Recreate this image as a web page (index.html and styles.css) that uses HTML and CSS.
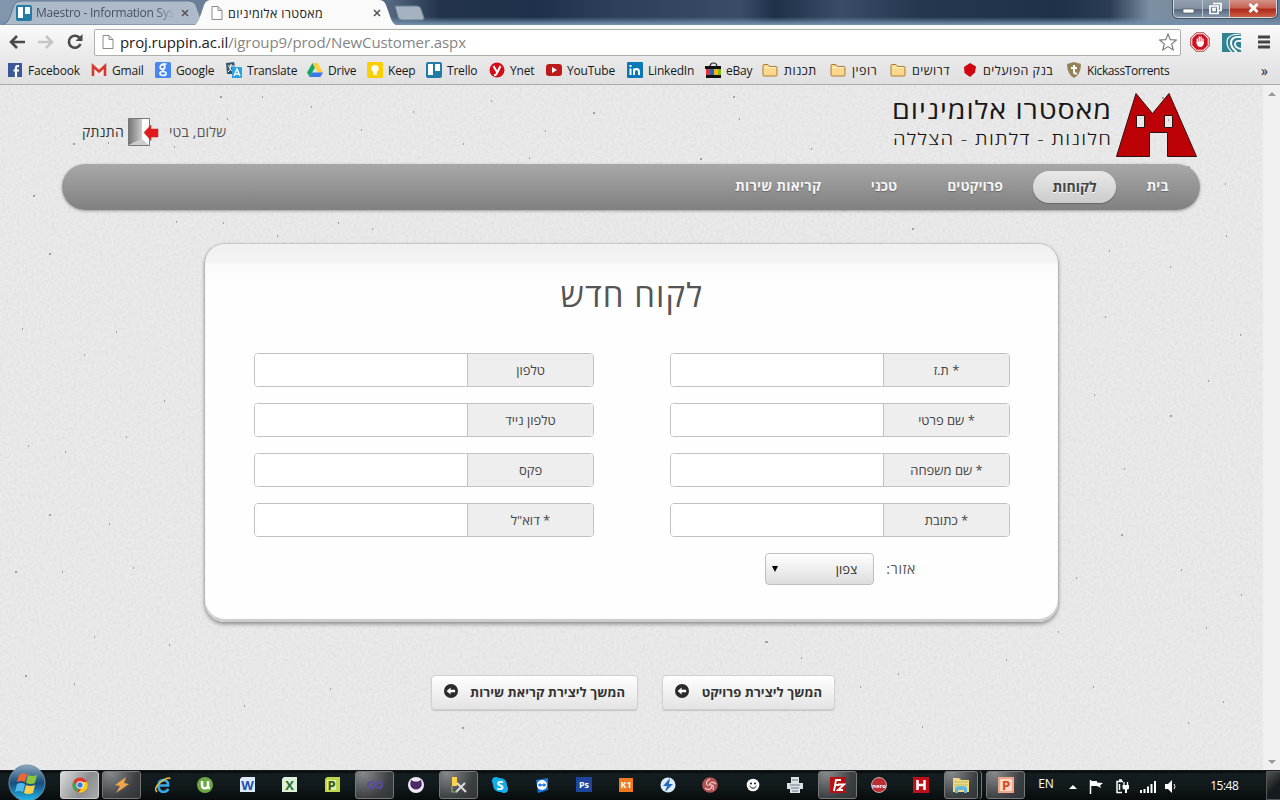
FILE: index.html
```html
<!DOCTYPE html>
<html lang="he">
<head>
<meta charset="utf-8">
<title>מאסטרו אלומיניום</title>
<link rel="stylesheet" href="styles.css">
</head>
<body>
<svg width="0" height="0" class="defs">
  <defs>
    <symbol id="doc" viewBox="0 0 12 14"><path d="M1 .5h6l4 4v9H1z" fill="#fff" stroke="#8a8a8a"/><path d="M7 .5v4h4" fill="none" stroke="#8a8a8a"/></symbol>
    <symbol id="trello" viewBox="0 0 16 16"><rect width="16" height="16" rx="2" fill="#237ba8"/><rect x="2" y="2" width="5" height="11" fill="#fff"/><rect x="9" y="2" width="5" height="7" fill="#fff"/></symbol>
    <symbol id="folder" viewBox="0 0 16 16"><path d="M1 13V3.500q0-1 1-1H6l1.500 2H14q1 0 1 1V13q0 1-1 1H2q-1 0-1-1z" fill="#fbd88c" stroke="#ad7c36"/><path d="M2 5.500h12" stroke="#fff3cf"/></symbol>
    <symbol id="back" viewBox="0 0 14 14"><circle cx="7" cy="7" r="7" fill="#2b2b2b"/><path d="M2.600 7l4-3.600v2.400h4.500v2.400H6.600v2.400z" fill="#fff"/></symbol>
    <linearGradient id="ball" x2="0" y2="1"><stop offset="0" stop-color="#8ba9bd"/><stop offset=".5" stop-color="#174d7c"/><stop offset="1" stop-color="#22b7ed"/></linearGradient>
    <linearGradient id="door"><stop offset="0" stop-color="#777"/><stop offset="1" stop-color="#ccc"/></linearGradient>
  </defs>
</svg>

<header class="titlebar">
  <div class="tab tab-idle">
    <svg class="shape" width="200" height="25"><path d="M0 25Q5 23 7 17L11 5Q13 1 18 1H186Q191 1 193 5L200 25z" fill="#adbac9" stroke="#66788e"/></svg>
    <svg class="ic16"><use href="#trello"/></svg><span class="tab-name">Maestro - Information Sys</span>
    <svg class="close" viewBox="0 0 8 8"><path d="M1 1l6 6M7 1L1 7"/></svg>
  </div>
  <div class="tab tab-active">
    <svg class="shape" width="203" height="26"><path d="M0 26Q4 23 6 17L10 5Q12 0 17 0H185Q190 0 192 5L197 19Q199 24 203 26z" fill="#fafafa"/></svg>
    <svg class="doc"><use href="#doc"/></svg><span class="tab-name">מאסטרו אלומיניום</span>
    <svg class="close" viewBox="0 0 8 8"><path d="M1 1l6 6M7 1L1 7"/></svg>
  </div>
  <svg class="newtab" width="32" height="16"><path d="M1 1H23Q26 1 27 4L30 13Q30 15 28 15H8Q5 15 4 12z" fill="#a5b2c0" stroke="#6c7f94"/></svg>
  <div class="winbtns"><i><svg width="28" height="18"><rect x="9" y="9" width="11" height="4" fill="#fff" stroke="#555" stroke-width=".7"/></svg></i><i><svg width="26" height="18"><path d="M10 3.500h8v7h-3M7 6h8v7.500H7zM10 8.500h2v2h-2z" fill="none" stroke="#fff" stroke-width="1.700"/></svg></i><i class="red"><svg width="46" height="18"><path d="M19.500 4l8 8M27.500 4l-8 8" stroke="#fff" stroke-width="3"/></svg></i></div>
</header>

<div class="toolbar">
  <svg class="nav-ic" width="16" height="14" viewBox="0 0 16 14"><path d="M8 1L2 7l6 6M2 7h14" fill="none" stroke="#4a4a4a" stroke-width="2.600"/></svg>
  <svg class="nav-ic" width="16" height="14" viewBox="0 0 16 14"><path d="M8 1l6 6-6 6M14 7H0" fill="none" stroke="#c6c6c6" stroke-width="2.600"/></svg>
  <svg class="nav-ic" width="16" height="16" viewBox="0 0 16 16"><path d="M13 4.500A6 6 0 1 0 13.500 10" fill="none" stroke="#4a4a4a" stroke-width="2.600"/><path d="M15.500 0v7h-7z" fill="#4a4a4a"/></svg>
  <div class="omnibox"><svg class="doc"><use href="#doc"/></svg><span class="url"><b>proj.ruppin.ac.il</b>/igroup9/prod/NewCustomer.aspx</span>
    <svg class="star" width="18" height="18" viewBox="0 0 18 18"><path d="M9 1l2.300 5.600 6 .4-4.600 3.900 1.500 6L9 13.600 3.800 16.900l1.500-6L.7 7l6-.4z" fill="#fff" stroke="#777" stroke-width="1.100"/></svg></div>
  <svg class="ext" width="20" height="20" viewBox="0 0 20 20"><path d="M6 .8h8L19.200 6v8L14 19.200H6L.8 14V6z" fill="#fff" stroke="#a33"/><path d="M6.600 2.300h6.800l4.300 4.300v6.800l-4.300 4.300H6.600l-4.300-4.300V6.600z" fill="#cf1020"/><path d="M7.300 7v4M9.200 5v5M11.100 5v5M13 7v4" stroke="#fff" stroke-width="1.300" stroke-linecap="round"/><path d="M6.700 9.500h7v2.500q-1 3-3.500 3T6.700 12z" fill="#fff"/></svg>
  <svg class="ext" width="19" height="19" viewBox="0 0 19 19"><rect width="19" height="19" fill="#328391"/><path d="M19 1Q5 1 5 9q0 6 5 10" fill="none" stroke="#fff" stroke-width="1.200"/><path d="M19 4Q9 3 9 10q0 5 6 9" fill="none" stroke="#fff" stroke-width="2"/><path d="M19 8q-6-1-6 3t6 5" fill="none" stroke="#fff" stroke-width="1.800"/></svg>
  <svg class="ext" width="14" height="14"><path d="M1 2h12M1 7h12M1 12h12" stroke="#444" stroke-width="3"/></svg>
</div>

<nav class="bookmarks">
  <a><svg class="ic16" viewBox="0 0 16 16"><rect x="1" y="1" width="14" height="14" fill="#3b5797"/><path d="M12 4h-1.500Q9 4 9 6v9M6.500 8.500H12" stroke="#fff" stroke-width="2.200" fill="none"/></svg>Facebook</a>
  <a><svg class="ic16" viewBox="0 0 16 16"><path d="M1 3h14v11H1z" fill="#f2e9e8"/><path d="M2 14V4l6 5.500L14 4v10" fill="none" stroke="#d33a30" stroke-width="2.600"/></svg>Gmail</a>
  <a><svg class="ic16" viewBox="0 0 16 16"><rect width="16" height="16" rx="1.500" fill="#4688f1"/><ellipse cx="7.500" cy="5" rx="2.300" ry="2.300" fill="none" stroke="#fff" stroke-width="1.700"/><path d="M11.500 2H7M8 7.500v1.800" stroke="#fff" stroke-width="1.500"/><ellipse cx="8" cy="11.500" rx="3" ry="2" fill="none" stroke="#fff" stroke-width="1.700"/></svg>Google</a>
  <a><svg class="ic16" viewBox="0 0 16 16"><path d="M0 1l8-1 3 12H1z" fill="#35566e"/><path d="M2 4h7M5 2v2q0 4-3 6M3 5q2 4 5 5" stroke="#fff" fill="none"/><path d="M6 5h9q1 0 1 1v10H6z" fill="#2ba0e4"/><path d="M8 14l3-7 3 7M9 12h4" fill="none" stroke="#fff" stroke-width="1.400"/></svg>Translate</a>
  <a><svg class="ic16" viewBox="0 0 16 16"><path d="M5.500 1L0 10.500 2.700 15 8 5.500z" fill="#16a765"/><path d="M5.500 1h5L16 10.500h-5.300z" fill="#ffcf3e"/><path d="M5 10.500h11L13.300 15H2.700z" fill="#3b78e7"/></svg>Drive</a>
  <a><svg class="ic16" viewBox="0 0 16 16"><rect width="16" height="16" rx="1.500" fill="#fad005"/><circle cx="8" cy="6.500" r="3.600" fill="#fff"/><path d="M6.300 9h3.400v4H6.300z" fill="#fff"/></svg>Keep</a>
  <a><svg class="ic16"><use href="#trello"/></svg>Trello</a>
  <a><svg class="ic16" viewBox="0 0 16 16"><circle cx="8" cy="8" r="7.500" fill="#d40d17"/><path d="M4.500 4l3.500 6M11.500 4L7.500 12Q7 13.500 5 13" fill="none" stroke="#fff" stroke-width="2"/></svg>Ynet</a>
  <a><svg class="ic16" viewBox="0 0 16 16"><rect y="2" width="16" height="12" rx="3" fill="#bd1b1a"/><path d="M6 5v6l5-3z" fill="#fff"/></svg>YouTube</a>
  <a><svg class="ic16" viewBox="0 0 16 16"><rect width="16" height="16" rx="1" fill="#0879b6"/><path d="M3.500 6.500V13M7 13V6.500M7 10q0-3 2.500-3T12 10v3M3.500 3v2" fill="none" stroke="#fff" stroke-width="2"/></svg>LinkedIn</a>
  <a><svg class="ic16" viewBox="0 0 16 16"><path d="M5 5Q5 1 8.500 1T12 5" fill="none" stroke="#222" stroke-width="1.200"/><path d="M0 4h16v3H0zM1 13h15v3H1z" fill="#111"/><path d="M1 7h4v6H1z" fill="#e43137"/><path d="M5 7h4v6H5z" fill="#2363bb"/><path d="M9 7h4v6H9z" fill="#f5b908"/><path d="M13 7h3v6h-3z" fill="#86b817"/></svg>eBay</a>
  <a class="he"><svg class="ic16"><use href="#folder"/></svg>תכנות</a>
  <a class="he"><svg class="ic16"><use href="#folder"/></svg>רופין</a>
  <a class="he"><svg class="ic16"><use href="#folder"/></svg>דרושים</a>
  <a class="he"><svg class="ic16" viewBox="0 0 16 16"><path d="M8 1l6 3.500-1 6L8 15 2.500 11 2 5z" fill="#ce0710"/></svg>בנק הפועלים</a>
  <a><svg class="ic16" viewBox="0 0 16 16"><path d="M1 2l7-2 7 2q0 10-7 14Q1 12 1 2z" fill="#94835a"/><path d="M8 3v7q0 2 3 1.500M5 6h6" fill="none" stroke="#fff" stroke-width="2"/></svg>KickassTorrents</a>
  <span class="more">»</span>
</nav>

<div class="viewport">
  <main class="page">
    <svg class="paper" width="1263" height="686">
      <filter id="grain" x="0" y="0" width="100%" height="100%"><feTurbulence type="fractalNoise" baseFrequency=".35" numOctaves="2" seed="4"/><feColorMatrix values="0 0 0 0 .4  0 0 0 0 .4  0 0 0 0 .4  .3 0 0 0 -.11"/></filter>
      <rect width="1263" height="686" fill="#eaeaea"/>
      <rect width="1263" height="686" filter="url(#grain)"/>
      <path d="M220 12h2m40 0h1m-36 22h1M73 59h2m33-1h1m65 4h1M197 124h2m24 14h1M176 137h1M373 121h2M372 144h1M338 138h1M277 151h1M33 111h2m14 58h2m65 78h1M22 244h1M84 270h1M164 316h1M28 361h1m36 6h1m60-15h1M49 430h2m58 9h1M15 487h2m45 0h1m70-4h1M94 552h1M25 591h2m47 8h1M169 560h1M244 621h1M330 604h1M477 616h1M462 643h2M532 595h1M765 557h3M801 573h1M898 589h1M860 602h1M922 642h1M1006 575h1M1058 547h1M1076 493h1M1121 450h2M1181 485h1M1206 543h1M1241 510h1M1124 384h1M1094 310h1M1170 331h2M1208 296h1M1240 250h1M1105 232h1M1170 182h1M1226 151h1M1109 166h1M1188 82h2M1162 13h2M1168 35h1M1225 99h1M843 125h2M912 144h2M733 12h2M739 34h1M811 64h1M700 74h2M593 28h2M545 46h1M491 16h1M463 59h1M529 73h1M413 27h1M361 45h1M311 22h1M1093 602h1M1188 638h1M1223 617h1" stroke="#888" stroke-width="1.500"/>
    </svg>

    <header class="site-head" dir="rtl">
      <svg class="logo" width="308" height="68" viewBox="890 90 308 68" direction="ltr">
        <path d="M1116.500 156.500L1136 93.500 1152.500 113.500 1169 93.500 1196.500 156.500H1167.500V132.500H1149.500V156.500zM1136.500 115.500h8v12h-8zM1164.500 115.500h8v12h-8z" fill="#bd0207" fill-rule="evenodd" stroke="#31100f"/>
        <text x="892" y="119" textLength="220" lengthAdjust="spacingAndGlyphs" class="brand">מאסטרו אלומיניום</text>
        <text x="893" y="145" textLength="219" lengthAdjust="spacingAndGlyphs" class="tagline">חלונות - דלתות - הצללה</text>
      </svg>
      <div class="account">
        <span>שלום, בטי</span>
        <svg width="31" height="28" viewBox="0 0 31 28"><path d="M.5 .5h21v27H.5z" fill="#fff" stroke="#777"/><path d="M1 1h13v20L1 27z" fill="url(#door)"/><path d="M1 27l13-6 7 6z" fill="#ccc"/><path d="M16 14.500L23 7v4h7v8h-7v3.500z" fill="#e1191c" stroke="#b33" stroke-width=".6"/></svg>
        <a>התנתק</a>
      </div>
    </header>

    <nav class="menu" dir="rtl"><a>בית</a><a class="on">לקוחות</a><a>פרויקטים</a><a>טכני</a><a>קריאות שירות</a></nav>

    <section class="card" dir="rtl">
      <h1>לקוח חדש</h1>
      <div class="cols">
        <div class="col">
          <label class="field"><span>* ת.ז</span><input></label>
          <label class="field"><span>* שם פרטי</span><input></label>
          <label class="field"><span>* שם משפחה</span><input></label>
          <label class="field"><span>* כתובת</span><input></label>
          <div class="region"><span>אזור:</span><div class="select"><span>צפון</span><i></i></div></div>
        </div>
        <div class="col">
          <label class="field"><span>טלפון</span><input></label>
          <label class="field"><span>טלפון נייד</span><input></label>
          <label class="field"><span>פקס</span><input></label>
          <label class="field"><span>* דוא"ל</span><input></label>
        </div>
      </div>
    </section>

    <div class="actions" dir="rtl">
      <button class="b1"><span>המשך ליצירת פרויקט</span><svg><use href="#back"/></svg></button>
      <button class="b2"><span>המשך ליצירת קריאת שירות</span><svg><use href="#back"/></svg></button>
    </div>
  </main>
  <div class="scroll"><i class="up"></i><i class="down"></i></div>
</div>

<footer class="taskbar">
  <svg class="start" width="40" height="36" viewBox="0 0 40 36"><circle cx="20" cy="19" r="18" fill="url(#ball)" stroke="#7394a8"/><path d="M12 11q4-3 8-1l-2 8q-4-2-8 0z" fill="#ee6534"/><path d="M21 11q4 2 9 0l-2 8q-4 2-9 0z" fill="#8bc53f"/><path d="M10 20q4-2 8 0l-2 8q-4-2-8 0z" fill="#51bae9"/><path d="M19 21q4 2 9 0l-2 8q-5 2-9 0z" fill="#fed04a"/></svg>
  <div class="apps">
    <i class="open lit"><svg viewBox="0 0 16 16"><circle cx="8" cy="8" r="7.500" fill="#e3382e"/><path d="M1.500 4.300L6.500 12l-.5 3.200A7.500 7.500 0 0 1 1.500 4.300z" fill="#3aa757"/><path d="M8 5h7A7.500 7.500 0 0 1 6.500 15.400L10.500 10z" fill="#fbcb15"/><circle cx="8" cy="8" r="3.700" fill="#fff"/><circle cx="8" cy="8" r="2.700" fill="#2f7de1"/></svg></i>
    <i class="open"><svg viewBox="0 0 16 16"><path d="M12 0L1 8l5 1-4 7 13-9-5-1z" fill="#f3a34d"/></svg></i>
    <i><svg viewBox="0 0 16 16"><path d="M13.500 12q-2 3-5.500 3-5-1-4.500-7Q4 3 8.500 3q5 .500 4.500 5.500H4" fill="none" stroke="#38a8e9" stroke-width="2.600"/><path d="M2 15Q-2 11 6 5T15 2" fill="none" stroke="#f2bd35" stroke-width="1.500"/></svg></i>
    <i><svg viewBox="0 0 16 16"><circle cx="8" cy="8" r="8" fill="#6ca942"/><path d="M5 4v4q0 4 4 3l2-1V4M11 9l1 3" stroke="#fff" stroke-width="2.500" fill="none"/></svg></i>
    <i><svg viewBox="0 0 16 16"><path d="M3 0h13v15H1V2z" fill="#dce9fb"/><text x="8.500" y="13" class="g" fill="#1f51a5">W</text></svg></i>
    <i><svg viewBox="0 0 16 16"><path d="M3 0h13v15H1V2z" fill="#dff0d8"/><text x="8.500" y="13" class="g" fill="#267133">X</text></svg></i>
    <i><svg viewBox="0 0 16 16"><path d="M3 0h13v15H1V2z" fill="#bdd64a"/><path d="M3 3h9v10H3z" fill="#e1edb0"/><text x="7.500" y="13" class="g" fill="#34590c">P</text></svg></i>
    <i class="open"><svg viewBox="0 0 16 16"><path d="M8 8C5 3 1 5 1 8s4 5 7 0 7-3 7 0-4 5-7 0z" fill="none" stroke="#594d9c" stroke-width="2"/></svg></i>
    <i><svg viewBox="0 0 16 16"><circle cx="8" cy="8" r="8" fill="#eeeaf3"/><path d="M3 3l3 1.500h4L13 3q1.500 5 0 7-5 5-10 0-1.500-3 0-7z" fill="#4d2b69"/></svg></i>
    <i class="open"><svg viewBox="0 0 16 16"><rect x="1" width="5" height="9" fill="#ffd04a"/><path d="M5 15l9-9M6 6l9 9" stroke="#ddd" stroke-width="2"/><path d="M1 9v6h5" stroke="#8b7" fill="none"/></svg></i>
    <i><svg viewBox="0 0 16 16"><circle cx="8" cy="8" r="7" fill="#13aeea"/><circle cx="4" cy="4" r="4" fill="#13aeea"/><circle cx="12" cy="12" r="4" fill="#13aeea"/><text x="8" y="12.500" class="g">S</text></svg></i>
    <i><svg viewBox="0 0 16 16"><path d="M2 3l12-2v12l-10 3z" fill="#1678dd"/><circle cx="8" cy="8" r="5" fill="#fff"/><path d="M3.500 8l3-2v1.200h3V6l3 2-3 2V8.800h-3V10z" fill="#1678dd"/></svg></i>
    <i><svg viewBox="0 0 16 16"><rect width="16" height="15" fill="#1d469c"/><text x="8" y="11" class="g s">Ps</text></svg></i>
    <i><svg viewBox="0 0 16 16"><rect x="1" y="1" width="14" height="14" fill="#ee7921"/><text x="8" y="11" class="g s">K1</text></svg></i>
    <i><svg viewBox="0 0 16 16"><circle cx="8" cy="8" r="7.500" fill="#dcecff"/><path d="M10 1L3 9h4l-2 6 8-8H9z" fill="#2869b9"/></svg></i>
    <i><svg viewBox="0 0 16 16"><circle cx="8" cy="8" r="7.800" fill="#b25151"/><path d="M8 2q-6 3-2 7M14 7Q9 3 7 8M11 13q2-6-4-5M3 11q5 4 7-2" fill="none" stroke="#f0cccc" stroke-width="1.200"/></svg></i>
    <i><svg viewBox="0 0 16 16"><circle cx="8" cy="8" r="6.300" fill="#fff"/><circle cx="6" cy="6.500" r="1" fill="#111"/><circle cx="10" cy="6.500" r="1" fill="#111"/><path d="M4.500 9q3.500 4.500 7 0" fill="none" stroke="#111"/></svg></i>
    <i><svg viewBox="0 0 16 16"><path d="M4 0h8v6H4zM0 6h16v6H0zM3 10h10v6H3z" fill="#dce1e5"/><path d="M3 8h10M4 11h8M5 14h6M5 3h6" stroke="#6c7985"/></svg></i>
    <i class="open"><svg viewBox="0 0 16 16"><rect width="16" height="16" fill="#b70f14"/><path d="M4 14L6 3h5M5 8h4M8 7.500h6l-6 5.500h5" fill="none" stroke="#fff" stroke-width="1.800"/></svg></i>
    <i><svg viewBox="0 0 16 16"><circle cx="8" cy="8" r="7.500" fill="#bb2e31" stroke="#cda8a8"/><text x="8" y="10.500" class="g n">nero</text></svg></i>
    <i><svg viewBox="0 0 16 16"><rect width="16" height="16" fill="#bd101b"/><path d="M4.500 3v10M11.500 3v10M4.500 8h7" stroke="#fff" stroke-width="2.500"/></svg></i>
    <i class="open stack"><svg viewBox="0 0 16 16"><path d="M0 1h6l2 2h8v12H0z" fill="#f2d884"/><path d="M1 5h14M1 8h14" stroke="#b5bd69"/><path d="M2 16v-5q0-2 6-2t6 2v5h-3v-3H5v3z" fill="#5fb7df"/></svg></i>
    <i class="open"><svg viewBox="0 0 16 16"><rect width="16" height="16" rx="1" fill="#fbd8c5"/><rect x="1" y="1" width="14" height="14" fill="none" stroke="#e7764b"/><text x="8" y="12.500" class="g" fill="#cd4a1f">P</text></svg></i>
  </div>
  <div class="tray">
    <span class="lang">EN</span>
    <svg width="8" height="5"><path d="M0 5l4-4 4 4z" fill="#fff"/></svg>
    <svg width="15" height="15" viewBox="0 0 15 15"><path d="M1.500 1v14" stroke="#fff" stroke-width="1.500"/><path d="M2 2h6v1.500L14 4l-3 2.500 1 2.500-4-2H2z" fill="#fff"/></svg>
    <svg width="14" height="15" viewBox="0 0 14 15"><path d="M6 13.500H1V2.500h6M3 1h3M3.500 5v6" fill="none" stroke="#fff" stroke-width="1.500"/><path d="M8 3v3M11.500 3v3" stroke="#fff" stroke-width="1.300"/><path d="M6.500 6h6.500v3q0 1.500-2 1.500V14H9v-3.500Q6.500 10.500 6.500 9z" fill="#fff"/></svg>
    <svg width="16" height="13"><path d="M1 13v-3M4.500 13V9M8 13V6.500M11.500 13V4M15 13V1" stroke="#fff" stroke-width="2"/></svg>
    <svg width="13" height="13" viewBox="0 0 13 13"><path d="M0 4h3l4-4v13L3 9H0z" fill="#fff"/><path d="M9 4q2 2.500 0 5" fill="none" stroke="#fff"/></svg>
    <time>15:48</time>
  </div>
  <div class="peek"></div>
</footer>
</body>
</html>
```
FILE: styles.css
```css
* { box-sizing: border-box; }
body { margin: 0; width: 1280px; height: 800px; overflow: hidden; display: flex; flex-direction: column; font-family: "Open Sans", "DejaVu Sans", sans-serif; font-size: 12px; color: #333; background: #e7e7e7; }
svg { flex: none; display: block; }
.defs { position: absolute; }
.ic16 { width: 16px; height: 16px; }
.doc { width: 12px; height: 14px; }

.titlebar { height: 25px; flex: none; display: flex; position: relative; background: linear-gradient(180deg, transparent 68%, #7290ad 98%), linear-gradient(90deg, #8297ae 0, #54677f 390px, #22334b 440px, #1f304a 540px, #2c3e57 600px, #3b4d66 740px, #1f3049 775px, #3b4d66 840px, #25364f 920px, #1f3049 1060px, #2b3c54 1110px, #7d8fa3 1150px, #667b92 100%); }
.tab { position: relative; display: flex; align-items: center; height: 25px; }
.tab > * { position: relative; }
.tab .shape { position: absolute; left: 0; top: 0; }
.tab-idle { width: 194px; padding-left: 13px; margin-left: 3px; color: #47515e; }
.tab-active { width: 203px; padding-left: 17px; z-index: 1; color: #222; height: 26px; margin-left: -3px; }
.tab-name { white-space: nowrap; overflow: hidden; }
.tab-idle .tab-name { width: 140px; margin-left: 4px; letter-spacing: -.25px; -webkit-mask-image: linear-gradient(90deg, #000 85%, transparent); }
.tab-active .tab-name { width: 145px; margin-left: 5px; font-size: 12.5px; letter-spacing: .33px; }
.close { width: 8px; height: 8px; stroke: #555; stroke-width: 1.6; }
.tab-idle .close { margin-left: 5px; }
.newtab { margin: 5px 0 0 -3px; z-index: 2; }
.winbtns { margin-left: auto; margin-right: 3px; height: 18px; display: flex; border: 1px solid #d2dae2; border-top: 0; border-radius: 0 0 5px 5px; outline: 1px solid #44515f; overflow: hidden; background: linear-gradient(#94a1af, #8190a2 50%, #53657a 51%, #8294a8); }
.winbtns i { height: 18px; border-right: 1px solid #bbc5cf; }
.winbtns .red { border: 0; background: linear-gradient(#d49187, #c56152 45%, #ac2718 50%, #d2654a); }

.toolbar { height: 33px; flex: none; display: flex; align-items: center; background: linear-gradient(#fafafa, #e9e9e9); padding-left: 9px; }
.nav-ic { margin-right: 13px; }
.omnibox { width: 1087px; height: 27px; margin-left: -2px; margin-top: 1px; border: 1px solid #b0b0aa; border-radius: 2px; background: #fff; display: flex; align-items: center; padding: 0 3px 0 7px; }
.url { margin-left: 6px; font-size: 15px; color: #858585; letter-spacing: -.09px; }
.url b { color: #222; font-weight: 400; }
.star { margin-left: auto; }
.ext { margin: 1px 0 0 9px; }
.ext + .ext { margin-left: 12px; }
.ext:last-child { margin-left: 16px; }

.bookmarks { height: 27px; flex: none; display: flex; align-items: center; padding: 0 0 2px 7px; background: linear-gradient(#e9e9e9, #e0e0e0); border-bottom: 1px solid #aaa; color: #181818; }
.bookmarks a { display: flex; align-items: center; gap: 5px; white-space: nowrap; letter-spacing: -.2px; flex: none; }
.bookmarks .he { font-size: 12.5px; gap: 6px; letter-spacing: .45px; }
.bookmarks a:nth-child(16) { letter-spacing: -.4px; }
.bookmarks a:nth-child(1) { width: 84px; }
.bookmarks a:nth-child(2) { width: 64px; }
.bookmarks a:nth-child(3) { width: 71px; }
.bookmarks a:nth-child(4) { width: 81px; }
.bookmarks a:nth-child(5) { width: 60px; }
.bookmarks a:nth-child(6) { width: 59px; }
.bookmarks a:nth-child(7) { width: 63px; }
.bookmarks a:nth-child(8) { width: 57px; }
.bookmarks a:nth-child(9) { width: 81px; }
.bookmarks a:nth-child(10) { width: 78px; }
.bookmarks a:nth-child(11) { width: 57px; }
.bookmarks a:nth-child(12) { width: 68px; }
.bookmarks a:nth-child(13) { width: 60px; }
.bookmarks a:nth-child(14) { width: 72px; }
.bookmarks a:nth-child(15) { width: 104px; gap: 5px; }
.more { margin-left: auto; margin-right: 12px; font-size: 14px; }

.viewport { height: 685px; flex: none; display: flex; }
.page { width: 1263px; position: relative; }
.page > * { position: relative; }
.page > .paper { position: absolute; inset: 0; }
.scroll { width: 17px; background: #f0f0f0; display: flex; flex-direction: column; justify-content: space-between; align-items: center; padding: 7px 0 6px; }
.scroll i { border: 4px solid transparent; }
.up { border-top: 0 !important; border-bottom-color: #999 !important; }
.down { border-bottom: 0 !important; border-top-color: #999 !important; }

.site-head { height: 79px; padding: 5px 65px 0 82px; display: flex; justify-content: space-between; }
.brand { font-size: 25px; font-weight: 400; fill: #181818; letter-spacing: .8px; }
.tagline { font-size: 16.5px; font-weight: 300; fill: #111; letter-spacing: 1px; }
.account { display: flex; align-items: center; height: 28px; margin-top: 28px; font-size: 14px; color: #555; white-space: nowrap; }
.account span, .account a { letter-spacing: .2px; margin-top: -2px; }
.account svg { margin: 0 10px 0 4px; }
.account a { color: #333; }
.menu { width: 1138px; height: 46px; margin-left: 62px; border-radius: 23px; background: linear-gradient(#a8a8a8, #808080); box-shadow: 0 1px 3px #999; display: flex; align-items: center; gap: 10px; padding-right: 11px; font-size: 14px; font-weight: 700; color: #f4f4f4; }
.menu a { height: 32px; line-height: 30px; text-align: center; text-shadow: 0 1px 1px #666; white-space: nowrap; border-radius: 16px; }
.menu a:nth-child(1) { width: 63px; }
.menu a:nth-child(2) { width: 83px; }
.menu a:nth-child(3) { width: 96px; }
.menu a:nth-child(4) { width: 66px; }
.menu a:nth-child(5) { width: 126px; letter-spacing: .2px; }
.menu .on { background: linear-gradient(#e8e8e8, #ccc); color: #444; text-shadow: 0 1px #fff; box-shadow: 0 1px 1px #666; line-height: 32px; }

.card { width: 853px; height: 378px; margin: 34px 0 0 205px; border-radius: 20px; background: linear-gradient(#f0f0f0, #f3f3f3 18px, #fafafa 20px, #fdfdfd 36px, #fefefe 38px); box-shadow: 0 0 2px #999, 0 2px 4px #888, inset 0 -3px 1px #ccc; padding: 26px 48px 0 49px; }
h1 { margin: 0 0 35px; height: 48px; line-height: 49px; font-size: 33px; letter-spacing: 1.1px; font-weight: 400; text-align: center; color: #555; }
.cols { display: flex; justify-content: space-between; }
.col { display: flex; flex-direction: column; gap: 16px; }
.field { display: flex; width: 340px; height: 34px; border: 1px solid #c2c2c2; border-radius: 4px; overflow: hidden; background: #fff; }
.field span { width: 126px; background: #eee; border-left: 1px solid #c2c2c2; text-align: center; line-height: 32px; font-size: 13px; color: #444; }
.field input { width: 212px; border: 0; outline: 0; background: #fff; }
.region { display: flex; align-items: center; padding-right: 94px; gap: 12px; font-size: 14px; color: #555; height: 32px; }
.region > span { letter-spacing: .7px; margin-top: -1px; }
.select { width: 109px; height: 32px; border: 1px solid #c0c0c0; border-radius: 4px; background: linear-gradient(#fff, #ddd); display: flex; align-items: center; justify-content: space-between; padding: 0 16px 0 6px; font-size: 13px; color: #333; }
.select i { border: 3.5px solid transparent; border-top: 6px solid #000; border-bottom: 0; }
.actions { display: flex; gap: 24px; padding-right: 428px; margin-top: 53px; }
button { height: 35px; padding: 0 12px; display: flex; align-items: center; justify-content: space-between; border: 1px solid #d0d0d0; border-radius: 4px; background: linear-gradient(#fff, #e3e3e3); box-shadow: 0 1px 1px #c4c4c4; font: 700 13px "Open Sans", "DejaVu Sans", sans-serif; color: #333; white-space: nowrap; }
button span { margin-top: -2px; letter-spacing: .05px; }
button svg { width: 14px; height: 14px; margin-top: -3px; }
.b1 { width: 173px; }
.b2 { width: 207px; }

.taskbar { height: 30px; flex: none; display: flex; position: relative; background: linear-gradient(#050808, #141d20 3px, #10181a 60%, #070b0d); border-top: 1px solid #161b1d; }
.start { margin: -7px 0 0 7px; }
.apps { display: flex; margin-left: 11px; }
.apps i { width: 42.1px; height: 28px; padding: 6px 0 0 13px; flex: none; font-style: normal; }
.apps svg { width: 16px; height: 16px; }
.apps .open { width: 39.1px; margin: 0 1px 0 2px; padding-left: 11px; border: 1px solid #777; border-radius: 3px; background: radial-gradient(circle at 20% 0, #888c8e, #3d4143 65%, #303437); padding-top: 5px; }
.apps .lit { background: linear-gradient(120deg, #ddd, #8c8e90 60%, #aaa); border-color: #ccc; }
.apps .stack { width: 34.1px; margin-right: 6px; padding-left: 8px; box-shadow: 3px 0 #141d20, 4px 0 #777; }
.start { margin-left: 7px; }
.g { font: 700 13px "Open Sans", sans-serif; text-anchor: middle; }
.g:not([fill]) { fill: #fff; }
.g.s { font-size: 9px; }
.g.n { font-size: 6px; }
.tray { display: flex; align-items: center; color: #fff; height: 29px; margin-left: 12px; }
.lang { width: 31px; margin-top: -5px; }
.tray svg { margin-right: 12px; margin-top: 2px; }
.tray svg:nth-of-type(3) { margin-right: 10px; }
.tray svg:nth-of-type(4) { margin-right: 9px; }
time { margin-left: 20px; letter-spacing: -.5px; }
.peek { width: 14px; height: 29px; position: absolute; right: 0; top: 0; border: 1px solid #555; border-right: 0; background: linear-gradient(135deg, #555, #151b1e 60%); }
```
